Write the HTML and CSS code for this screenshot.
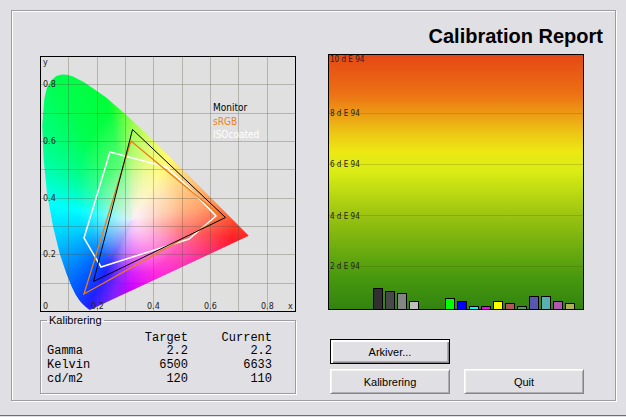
FILE: index.html
```html
<!DOCTYPE html>
<html lang="sv">
<head>
    <meta charset="utf-8">
    <title>Calibration Report</title>
    <link rel="stylesheet" href="styles.css">
</head>
<body>
    <div class="window">
        <main class="frame">
            <h1 class="title">Calibration Report</h1>
            <div class="columns">
                <section class="left">
                    <div class="chart chromaticity">
                        <div class="gamut"></div>
                        <svg class="overlay" viewBox="0 0 254 254">
                            <path class="grid" d="M27.5 0V254M56.5 0V254M84.5 0V254M112.5 0V254M141.5 0V254M169.5 0V254M197.5 0V254M226.5 0V254M0 27.5H254M0 56.5H254M0 84.5H254M0 112.5H254M0 141.5H254M0 169.5H254M0 197.5H254M0 226.5H254"/>
                            <polygon class="profile iso" points="69,95 125,110 147,130 175,159 148,182 60,210 43,181"/>
                            <polygon class="profile srgb" points="90,84 181,160 43,237"/>
                            <polygon class="profile monitor" points="91.5,72.5 184.5,160.5 52.5,224.5"/>
                            <g class="axis">
                                <text x="2" y="8">y</text>
                                <text x="2" y="30">0.8</text>
                                <text x="2" y="87">0.6</text>
                                <text x="2" y="144">0.4</text>
                                <text x="2" y="200">0.2</text>
                                <text x="2" y="252">0</text>
                                <text x="50" y="252">0.2</text>
                                <text x="106" y="252">0.4</text>
                                <text x="163" y="252">0.6</text>
                                <text x="220" y="252">0.8</text>
                                <text x="247" y="252">x</text>
                            </g>
                            <g class="legend">
                                <text class="monitor" x="172" y="54">Monitor</text>
                                <text class="srgb" x="172" y="68">sRGB</text>
                                <text class="iso" x="172" y="81">ISOcoated</text>
                            </g>
                        </svg>
                    </div>
                    <fieldset class="results">
                        <legend>Kalibrering</legend>
                        <table>
                            <thead>
                                <tr><th></th><th>Target</th><th>Current</th></tr>
                            </thead>
                            <tbody>
                                <tr><th>Gamma</th><td>2.2</td><td>2.2</td></tr>
                                <tr><th>Kelvin</th><td>6500</td><td>6633</td></tr>
                                <tr><th>cd/m2</th><td>120</td><td>110</td></tr>
                            </tbody>
                        </table>
                    </fieldset>
                </section>
                <section class="right">
                    <div class="chart delta">
                        <svg class="overlay" viewBox="0 0 254 254">
                            <path class="grid" d="M0 58.5H254M0 109.5H254M0 160.5H254M0 211.5H254"/>
                            <g class="axis">
                                <text x="1" y="7">10 d E 94</text>
                                <text x="1" y="61">8 d E 94</text>
                                <text x="1" y="112">6 d E 94</text>
                                <text x="1" y="164">4 d E 94</text>
                                <text x="1" y="214">2 d E 94</text>
                            </g>
                            <!-- grey patches -->
                            <g class="bars">
                                <rect x="44.5" y="233.5" width="9" height="21" fill="#303030"/>
                                <rect x="56.5" y="236.5" width="9" height="18" fill="#484848"/>
                                <rect x="68.5" y="238.5" width="9" height="16" fill="#858585"/>
                                <rect x="80.5" y="246.5" width="9" height="8" fill="#c0c0c0"/>
                            </g>
                            <!-- colour patches -->
                            <g class="bars">
                                <rect x="116.5" y="243.5" width="9" height="11" fill="#00ff00"/>
                                <rect x="128.5" y="246.5" width="9" height="8" fill="#0000ff"/>
                                <rect x="140.5" y="251.5" width="9" height="3" fill="#00ffff"/>
                                <rect x="152.5" y="251.5" width="9" height="3" fill="#ff00ff"/>
                                <rect x="164.5" y="246.5" width="9" height="8" fill="#ffff00"/>
                                <rect x="176.5" y="248.5" width="9" height="6" fill="#b05858"/>
                                <rect x="188.5" y="251.5" width="9" height="3" fill="#50a050"/>
                                <rect x="200.5" y="241.5" width="9" height="13" fill="#5858b0"/>
                                <rect x="212.5" y="241.5" width="9" height="13" fill="#58b0b0"/>
                                <rect x="224.5" y="246.5" width="9" height="8" fill="#b058b0"/>
                                <rect x="236.5" y="248.5" width="9" height="6" fill="#b0b058"/>
                            </g>
                        </svg>
                    </div>
                    <div class="buttons">
                        <button class="default" type="button">Arkiver...</button>
                        <button class="calibrate" type="button">Kalibrering</button>
                        <button type="button">Quit</button>
                    </div>
                </section>
            </div>
        </main>
    </div>
</body>
</html>
```
FILE: styles.css
```css
:root {
    --face: #e0dfe3;
    --shadow: #9d9da1;
    --light: #ffffff;
}

* {
    box-sizing: border-box;
}

body {
    margin: 0;
    background: var(--face);
    color: #000;
    font: 11px/14px "Liberation Sans", Arial, sans-serif;
}

.window {
    padding: 10px 10px 14px 11px;
    border-bottom: 1px solid #6c6b82;
}

/* etched line, dark with a light copy one pixel down and right */
.frame,
.results {
    border: 1px solid var(--shadow);
    box-shadow: 1px 1px 0 var(--light), inset 1px 1px 0 var(--light);
}

.frame {
    padding: 13px 31px 6px 28px;
}

.title {
    margin: 0 -19px 6px 0;
    font-size: 20px;
    line-height: 24px;
    font-weight: bold;
    text-align: right;
}

.columns {
    display: grid;
    grid-template-columns: 1fr 1fr;
    gap: 32px;
}

.left {
    padding-top: 2px;
}

.chart {
    display: grid;
    aspect-ratio: 1;
    border: 1px solid #000;
}

.chromaticity {
    background: #e0e0e0;
}

.delta {
    background: linear-gradient(#e54814, #ec7014 15%, #eca014 24%, #ecc814 31%, #ece814 38%, #daec14 46%, #94c010 65%, #46980e 88%, #328410);
}

.gamut,
.overlay {
    grid-area: 1 / 1;
    width: 100%;
    height: 100%;
}

.overlay {
    z-index: 1;
}

/* spectral locus from 380 to 700 nm, hues turn round the white point */
.gamut {
    background:
        radial-gradient(ellipse 18% 22% at 38% 63%, rgba(250, 240, 255, 0.95), rgba(250, 240, 255, 0.4) 50%, transparent),
        radial-gradient(ellipse 32% 40% at 46% 54%, rgba(255, 250, 220, 0.65), rgba(255, 245, 225, 0.4) 50%, transparent),
        conic-gradient(from 0deg at 36% 64%,
            #80ff28 0deg, #d0ff20 14deg, #ffff10 30deg, #ffa828 54deg,
            #ff7028 80deg, #ff1e28 101deg, #ff0aa0 124deg, #ff00e0 157deg,
            #d000ff 180deg, #8020ff 194deg, #2020ff 207deg, #0058ff 219deg,
            #0090ff 236deg, #00d0ff 258deg, #00ffff 280deg, #00ff90 308deg,
            #00ff50 330deg, #00ff38 348deg, #80ff28 360deg);
    clip-path: polygon(
        19.2% 99.6%, 18.1% 98.8%, 17.2% 98%, 15.8% 96.7%, 14.9% 95.5%,
        13.6% 93.5%, 12% 90.3%, 10% 85.2%, 7.4% 77.6%, 4.8% 67%,
        2.4% 53.9%, 1% 40%, 0.5% 27%, 1.3% 16.4%, 2.3% 12.2%,
        4.1% 9.2%, 6% 7.5%, 8.1% 6.9%, 10.3% 7%, 12.6% 7.7%,
        17% 9.9%, 25.4% 15.7%, 33.4% 22.6%, 41.4% 30.2%, 49.3% 38%,
        57% 45.6%, 64% 52.6%, 69.8% 58.4%, 77% 65.6%, 81.8% 70.4%);
}

.grid {
    fill: none;
    stroke: rgba(80, 80, 60, 0.3);
}

.delta .grid {
    stroke: rgba(60, 70, 0, 0.2);
}

.axis {
    font: 8px "DejaVu Sans", Tahoma, sans-serif;
    fill: #222;
}

.delta .axis {
    font-family: "DejaVu Sans Condensed", Tahoma, sans-serif;
}

.legend {
    font: 10px "DejaVu Sans Condensed", Tahoma, sans-serif;
}

.legend .srgb {
    fill: #f08020;
}

.legend .iso {
    fill: #fff;
}

.profile {
    fill: none;
}

.profile.iso {
    stroke: #fff;
    stroke-width: 1.5;
}

.profile.srgb {
    stroke: #e88018;
    stroke-width: 1.3;
}

.profile.monitor {
    stroke: #000;
}

.bars {
    stroke: #000;
}

.results {
    margin: 1px 0 0;
    padding: 5px 6px 7px;
    min-width: 0;
}

.results legend {
    padding: 0 2px;
}

.results table {
    border-collapse: collapse;
    table-layout: fixed;
    width: 225px;
    font: 12px/14px "Liberation Mono", "Courier New", monospace;
}

.results th,
.results td {
    padding: 0;
    font-weight: normal;
    text-align: right;
}

.results thead th {
    line-height: 12px;
}

.results th:first-child {
    width: 57px;
    text-align: left;
}

.buttons {
    display: grid;
    grid-template-columns: 1fr 1fr;
    gap: 5px 14px;
    margin-top: 29px;
    padding-left: 2px;
}

button {
    height: 25px;
    padding: 0;
    border: 1px solid;
    border-color: #fff #858585 #858585 #fff;
    background: var(--face);
    box-shadow: inset 1px 1px 0 #f4f4f0, inset -1px -1px 0 #aeadb2;
    color: #000;
    font: 11px/14px "Liberation Sans", Arial, sans-serif;
}

button.default {
    border-color: #000;
    box-shadow: inset 2px 2px 0 #fff, inset -1px -1px 0 #858585, inset -2px -2px 0 #aeadb2;
}

button.calibrate {
    grid-column: 1;
}
```
